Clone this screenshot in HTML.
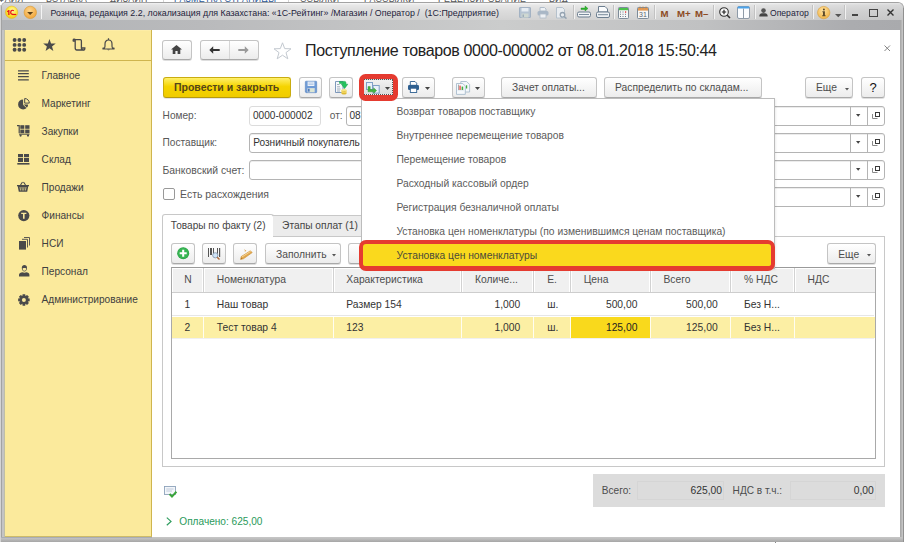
<!DOCTYPE html><html><head><meta charset="utf-8"><style>
*{margin:0;padding:0;box-sizing:border-box}
html,body{width:905px;height:543px;overflow:hidden;background:#fff}
body{position:relative;font-family:"Liberation Sans",sans-serif}
.t{position:absolute;line-height:1;white-space:nowrap}
.r{position:absolute}
.btn{position:absolute;border:1px solid #c4c4c4;border-bottom-color:#a9a9a9;border-radius:3px;background:linear-gradient(#ffffff,#ececec);box-shadow:0 1px 0 rgba(0,0,0,0.13)}
svg{position:absolute;overflow:visible}
</style></head><body>
<div class="r" style="left:0;top:0;width:905px;height:3px;overflow:hidden;background:#fff">
<div class="t" style="left:-2px;top:-4.6px;font-size:8.8px;letter-spacing:0.25px;color:#555">ФАЙЛ</div>
<div class="t" style="left:46px;top:-4.6px;font-size:8.8px;letter-spacing:0.25px;color:#555">ВСТАВКА</div>
<div class="t" style="left:110px;top:-4.6px;font-size:8.8px;letter-spacing:0.25px;color:#555">ДИЗАЙН</div>
<div class="t" style="left:174px;top:-4.6px;font-size:8.8px;letter-spacing:0.25px;color:#2b5797">РАЗМЕТКА СТРАНИЦЫ</div>
<div class="t" style="left:300px;top:-4.6px;font-size:8.8px;letter-spacing:0.25px;color:#555">ССЫЛКИ</div>
<div class="t" style="left:364px;top:-4.6px;font-size:8.8px;letter-spacing:0.25px;color:#555">РАССЫЛКИ</div>
<div class="t" style="left:438px;top:-4.6px;font-size:8.8px;letter-spacing:0.25px;color:#555">РЕЦЕНЗИРОВАНИЕ</div>
<div class="t" style="left:549px;top:-4.6px;font-size:8.8px;letter-spacing:0.25px;color:#555">ВИД</div>
<div class="r" style="left:163px;top:0;width:1px;height:3px;background:#d4d4d4"></div>
<div class="r" style="left:288px;top:0;width:1px;height:3px;background:#d4d4d4"></div>
</div>
<div class="r " style="left:0px;top:5px;width:1px;height:537px;background:#d5d5d5"></div>
<div class="r " style="left:1px;top:2px;width:903px;height:540px;background:#c6c6c6;border:1px solid #a3a3a3;border-bottom:none;border-radius:5px 6px 0 0"></div>
<div class="r " style="left:904px;top:0px;width:1px;height:543px;background:#fff"></div>
<div class="r " style="left:0px;top:542px;width:905px;height:1px;background:#fff"></div>
<div class="r " style="left:2px;top:3px;width:901px;height:17px;background:linear-gradient(#f8f8f8 0px,#e8e8e8 2px,#dcdcdc 8px,#d2d2d2 17px);border-radius:4px 5px 0 0"></div>
<div class="r " style="left:2px;top:3px;width:901px;height:17px;background:linear-gradient(90deg,rgba(150,152,156,0.28) 0px,rgba(150,152,156,0.10) 60px,rgba(255,255,255,0) 300px,rgba(255,255,255,0) 700px,rgba(140,142,146,0.18) 900px);border-radius:4px 5px 0 0"></div>
<div class="r " style="left:2px;top:20px;width:898px;height:10px;background:linear-gradient(90deg,#b1b3b6 0px,#b9babc 200px,#cbcccc 500px,#c0c1c2 700px,#abacaf 850px,#a9aaad 900px)"></div>
<div class="r " style="left:2px;top:30px;width:2px;height:507px;background:#c4c4c4"></div>
<div class="r " style="left:4px;top:30px;width:1px;height:507px;background:#c0bfa6"></div>
<div class="r " style="left:1px;top:537px;width:903px;height:5px;background:linear-gradient(#c6c6c6 0px,#bdbdbd 2px,#b4b4b4 3px,#a6a6a6 5px)"></div>
<div class="r " style="left:1px;top:537px;width:151px;height:1px;background:#a9adb5"></div>
<div class="r " style="left:775px;top:542px;width:1px;height:1px;background:#888"></div>
<div class="r " style="left:5px;top:30px;width:147px;height:507px;background:#fbea9c;border-right:1px solid #cfb54e;border-bottom:1px solid #cdbb6a"></div>
<div class="r " style="left:5px;top:30px;width:146px;height:1px;background:#fdeda6"></div>
<div class="r " style="left:5px;top:60px;width:146px;height:1px;background:#cfb54e"></div>
<div class="r " style="left:152px;top:30px;width:748px;height:507px;background:#fff"></div>
<div class="r " style="left:900px;top:20px;width:1px;height:517px;background:#aaaaaa"></div>
<div class="r " style="left:901px;top:20px;width:1px;height:517px;background:#b6b6b6"></div>
<div class="r " style="left:902px;top:20px;width:1px;height:517px;background:#c4c4c4"></div>
<div class="r " style="left:903px;top:8px;width:1px;height:534px;background:#909090"></div>
<svg style="left:5px;top:6px" width="14" height="14" viewBox="0 0 14 14"><defs><radialGradient id="g1c" cx="55%" cy="35%" r="70%"><stop offset="0" stop-color="#fffbb0"/><stop offset="0.55" stop-color="#fbe436"/><stop offset="1" stop-color="#eec112"/></radialGradient></defs><circle cx="6.6" cy="6.3" r="6.2" fill="url(#g1c)" stroke="#e0b52a" stroke-width="0.5"/><path d="M2 5.3 L3.6 4 H4.5 V8.9 H3.2 V5.7 L2.3 6.2 Z" fill="#e8121a"/><path d="M8.7 5 C8.2 3.9 5.7 3.9 5.7 6.3 C5.7 8.2 6.9 8.5 8.3 8.4" fill="none" stroke="#e8121a" stroke-width="1.2"/><path d="M7.4 8.5 H11.2" stroke="#e8121a" stroke-width="1.2"/></svg>
<svg style="left:23px;top:6px" width="14" height="14" viewBox="0 0 14 14"><defs><radialGradient id="gdd" cx="45%" cy="35%" r="65%"><stop offset="0" stop-color="#ffd68a"/><stop offset="1" stop-color="#f0a43a"/></radialGradient></defs><circle cx="7.3" cy="6.4" r="6.2" fill="url(#gdd)" stroke="#d8982e" stroke-width="0.6"/><path d="M4.1 5.9 H10.2 L7.15 9 Z" fill="#5a3f18"/></svg>
<div class="r " style="left:41px;top:5px;width:1px;height:14px;background:#b8b8b8;border-right:1px solid #f4f4f4"></div>
<div class="t " style="top:9.00px;font-size:8.85px;color:#1e1e3c;left:50.40px;">Розница, редакция 2.2, локализация для Казахстана: «1С-Рейтинг» /Магазин / Оператор /&nbsp; (1С:Предприятие)</div>
<svg style="left:519px;top:7px" width="12" height="11" viewBox="0 0 12 11"><rect x="0.5" y="0.5" width="11" height="10" rx="0.5" fill="#b5c3d2" stroke="#a3b2c3"/><rect x="2.5" y="1" width="7" height="3.5" fill="#e6ecf2"/><rect x="2.5" y="6.5" width="7" height="4" fill="#cfd8d2"/><rect x="3.5" y="7.5" width="1.5" height="2.5" fill="#9eacba"/></svg>
<svg style="left:537px;top:7px" width="12" height="11" viewBox="0 0 12 11"><path d="M3 0.5 H7.5 L9 2 V4 H3 Z" fill="#eef1f4" stroke="#b0bcc8"/><rect x="0.5" y="4" width="11" height="4.5" rx="1.5" fill="#a9b7c6"/><rect x="3" y="7" width="6" height="4" fill="#eef1f4" stroke="#b0bcc8" stroke-width="0.8"/></svg>
<svg style="left:556px;top:7px" width="12" height="12" viewBox="0 0 12 12"><path d="M0.5 0.5 H6.5 L8.5 2.5 V11 H0.5 Z" fill="#e9edf1" stroke="#b5c1cc"/><circle cx="6.5" cy="7.8" r="2.3" fill="none" stroke="#95a3b1" stroke-width="1.3"/><path d="M8.2 9.5 L10.5 11.6" stroke="#95a3b1" stroke-width="1.5"/></svg>
<div class="r" style="left:573px;top:5px;width:1px;height:14px;background:#c2c2c2;box-shadow:1px 0 0 #f2f2f2"></div>
<svg style="left:577px;top:5px" width="14" height="13" viewBox="0 0 14 13"><path d="M4 3 H8 V1 L11 3.5 L8 6 V4.5 H4 Z" fill="#2fb52f" stroke="#1c8c1c" stroke-width="0.4"/><rect x="0.5" y="7" width="13" height="5" rx="1.5" fill="#f2f4f6" stroke="#6d7f90"/><path d="M2 9.5 H12" stroke="#7b8c9c" stroke-width="1"/></svg>
<svg style="left:596px;top:6px" width="14" height="12" viewBox="0 0 14 12"><path d="M2.5 0.5 H9 L11.5 3 V6 H2.5 Z" fill="#fbfcfd" stroke="#6d7f90"/><rect x="0.5" y="6" width="13" height="5.5" rx="1.5" fill="#eef1f4" stroke="#6d7f90"/><path d="M2 8.7 H12" stroke="#7b8c9c" stroke-width="1"/></svg>
<div class="r" style="left:613px;top:5px;width:1px;height:14px;background:#c2c2c2;box-shadow:1px 0 0 #f2f2f2"></div>
<svg style="left:618px;top:7px" width="11" height="12" viewBox="0 0 11 12"><rect x="0.5" y="0.5" width="10" height="11" rx="0.8" fill="#f5f6f7" stroke="#7d8b99"/><rect x="1" y="1" width="9" height="2.2" fill="#4cc24c"/><g fill="#6f7c88"><rect x="2" y="4.5" width="1" height="1"/><rect x="4.5" y="4.5" width="1" height="1"/><rect x="2" y="6.8" width="1" height="1"/><rect x="4.5" y="6.8" width="1" height="1"/><rect x="7" y="6.8" width="1" height="1"/><rect x="2" y="9" width="1" height="1"/><rect x="4.5" y="9" width="1" height="1"/><rect x="7" y="9" width="1" height="1"/></g><rect x="7" y="4.3" width="1.2" height="1.5" fill="#e63a3a"/></svg>
<svg style="left:637px;top:6px" width="12" height="13" viewBox="0 0 12 13"><rect x="0.5" y="1.5" width="11" height="11" rx="0.8" fill="#f7f7f7" stroke="#7d8b99"/><rect x="1" y="2" width="10" height="2.6" fill="#e39a55"/><path d="M3 0.5 V2.5 M6 0.5 V2.5 M9 0.5 V2.5" stroke="#c9843f" stroke-width="0.8"/><text x="2" y="11" font-family="Liberation Sans" font-size="7" fill="#5b6670">31</text></svg>
<div class="r" style="left:654px;top:5px;width:1px;height:14px;background:#c2c2c2;box-shadow:1px 0 0 #f2f2f2"></div>
<div class="t " style="top:9.00px;font-size:9.6px;color:#8c4a22;left:660.60px;font-weight:bold;">M</div>
<div class="t " style="top:9.00px;font-size:9.6px;color:#8c4a22;left:677.00px;font-weight:bold;">M+</div>
<div class="t " style="top:9.00px;font-size:9.6px;color:#8c4a22;left:695.00px;font-weight:bold;">M&#8211;</div>
<div class="r" style="left:713px;top:5px;width:1px;height:14px;background:#c2c2c2;box-shadow:1px 0 0 #f2f2f2"></div>
<svg style="left:719px;top:7px" width="12" height="12" viewBox="0 0 12 12"><circle cx="5" cy="5" r="4.3" fill="#fafafa" stroke="#333" stroke-width="1.1"/><path d="M2.8 5 H7.2 M5 2.8 V7.2" stroke="#222" stroke-width="1.2"/><path d="M8 8 L11 11" stroke="#333" stroke-width="1.6"/></svg>
<svg style="left:737px;top:6px" width="13" height="13" viewBox="0 0 13 13"><rect x="0.5" y="0.5" width="12" height="12" rx="1.5" fill="#fafcff" stroke="#8d9aa8"/><rect x="0.5" y="0.5" width="12" height="2" rx="1" fill="#4aa3ec"/><path d="M6.5 2.5 V12.5" stroke="#8d9aa8" stroke-width="1"/></svg>
<div class="r" style="left:754px;top:5px;width:1px;height:14px;background:#c2c2c2;box-shadow:1px 0 0 #f2f2f2"></div>
<svg style="left:759px;top:8px" width="9" height="9" viewBox="0 0 9 9"><circle cx="4.5" cy="2.6" r="2.3" fill="#555"/><path d="M0.3 8.6 C0.3 5.8 2 5.3 4.5 5.3 C7 5.3 8.7 5.8 8.7 8.6 Z" fill="#444"/></svg>
<div class="t " style="top:9.00px;font-size:8.6px;color:#1e1e3c;left:770.00px;">Оператор</div>
<div class="r" style="left:812px;top:5px;width:1px;height:14px;background:#c2c2c2;box-shadow:1px 0 0 #f2f2f2"></div>
<svg style="left:817px;top:6px" width="14" height="14" viewBox="0 0 14 14"><defs><radialGradient id="ginf" cx="45%" cy="35%" r="65%"><stop offset="0" stop-color="#ffe3a3"/><stop offset="1" stop-color="#f1b447"/></radialGradient></defs><circle cx="6.7" cy="6.6" r="6.2" fill="url(#ginf)" stroke="#d9a03d" stroke-width="0.6"/><circle cx="6.9" cy="3.4" r="1" fill="#5c4a2a"/><path d="M5.4 5.3 H7.9 V9.3 H8.6 V10.3 H5.2 V9.3 H6 V6.3 H5.4 Z" fill="#5c4a2a"/></svg>
<svg style="left:835px;top:14px" width="7" height="4" viewBox="0 0 7 4"><path d="M0 0 H6.5 L3.25 3.3 Z" fill="#555"/></svg>
<div class="r" style="left:844px;top:5px;width:1px;height:14px;background:#c2c2c2;box-shadow:1px 0 0 #f2f2f2"></div>
<div class="r" style="left:852px;top:14px;width:6px;height:2px;background:#444"></div>
<div class="r" style="left:869px;top:9px;width:9px;height:8px;border:1px solid #444;border-top-width:1px"></div>
<svg style="left:887px;top:9px" width="7" height="7" viewBox="0 0 7 7"><path d="M0.5 0.5 L6.5 6.5 M6.5 0.5 L0.5 6.5" stroke="#333" stroke-width="1.4"/></svg>
<svg style="left:12px;top:38px" width="15" height="14" viewBox="0 0 15 14"><circle cx="2.60" cy="2.00" r="1.95" fill="#4a4a4a"/><circle cx="2.60" cy="6.90" r="1.95" fill="#4a4a4a"/><circle cx="2.60" cy="11.80" r="1.95" fill="#4a4a4a"/><circle cx="7.40" cy="2.00" r="1.95" fill="#4a4a4a"/><circle cx="7.40" cy="6.90" r="1.95" fill="#4a4a4a"/><circle cx="7.40" cy="11.80" r="1.95" fill="#4a4a4a"/><circle cx="12.20" cy="2.00" r="1.95" fill="#4a4a4a"/><circle cx="12.20" cy="6.90" r="1.95" fill="#4a4a4a"/><circle cx="12.20" cy="11.80" r="1.95" fill="#4a4a4a"/></svg>
<svg style="left:42.5px;top:39.4px" width="13" height="13" viewBox="0 0 13 13"><path d="M6.45 0.00 L8.04 4.42 L12.73 4.56 L9.02 7.43 L10.33 11.94 L6.45 9.30 L2.57 11.94 L3.88 7.43 L0.17 4.56 L4.86 4.42 Z" fill="#4a4a4a"/></svg>
<svg style="left:72.3px;top:39.2px" width="14" height="12" viewBox="0 0 14 12"><path d="M1.2 1 C1.2 0 3 0 3.2 1 L3.2 2 L1.2 2 Z M2.2 0.6 H8.2 C9.6 0.6 9.4 2.2 9.4 3 V9 C9.4 10 10.4 11 11.6 11 H4.8 C3.6 11 3.2 10 3.2 9 V1.8" fill="none" stroke="#4a4a4a" stroke-width="1.3" stroke-linejoin="round"/><path d="M9.4 9 H12.8 V10 C12.8 11 11.6 11 11.6 11" fill="none" stroke="#4a4a4a" stroke-width="1.3"/></svg>
<svg style="left:101.8px;top:38.3px" width="13" height="13" viewBox="0 0 13 13"><path d="M6.5 0.3 V1.5 M2.5 10 C3.2 9 3 7.8 3 6 C3 3.6 4.5 2 6.5 2 C8.5 2 10 3.6 10 6 C10 7.8 9.8 9 10.5 10 H12 V11 H1 V10 Z" fill="none" stroke="#4a4a4a" stroke-width="1.2" stroke-linejoin="round"/><path d="M5.2 11.5 C5.4 12.6 7.6 12.6 7.8 11.5 Z" fill="#4a4a4a"/></svg>
<div class="t " style="top:71.00px;font-size:10.1px;color:#404040;left:41.60px;">Главное</div>
<div class="t " style="top:99.00px;font-size:10.1px;color:#404040;left:41.60px;">Маркетинг</div>
<div class="t " style="top:127.00px;font-size:10.1px;color:#404040;left:41.60px;">Закупки</div>
<div class="t " style="top:155.00px;font-size:10.1px;color:#404040;left:41.60px;">Склад</div>
<div class="t " style="top:183.00px;font-size:10.1px;color:#404040;left:41.60px;">Продажи</div>
<div class="t " style="top:211.00px;font-size:10.1px;color:#404040;left:41.60px;">Финансы</div>
<div class="t " style="top:239.00px;font-size:10.1px;color:#404040;left:41.60px;">НСИ</div>
<div class="t " style="top:267.00px;font-size:10.1px;color:#404040;left:41.60px;">Персонал</div>
<div class="t " style="top:295.00px;font-size:10.1px;color:#404040;left:41.60px;">Администрирование</div>
<svg style="left:18.3px;top:69.6px" width="11" height="11" viewBox="0 0 11 11"><path d="M0 0.8 H10.8 M0 3.7 H10.8 M0 6.6 H10.8 M0 9.9 H10.8" stroke="#4a4a4a" stroke-width="1.3"/></svg>
<svg style="left:18px;top:97.6px" width="12" height="12" viewBox="0 0 12 12"><path d="M5.1 1.4 A5 5 0 1 0 10.1 6.4 H5.1 Z" fill="#4a4a4a"/><path d="M6.7 0.5 A4.6 4.6 0 0 1 11.3 5.1 H6.7 Z" fill="#fbea9c" stroke="#4a4a4a" stroke-width="1"/><path d="M5.1 6.4 L8.8 9.9" stroke="#fbea9c" stroke-width="0.9"/></svg>
<svg style="left:17.2px;top:125px" width="13" height="12" viewBox="0 0 13 12"><path d="M0 0.7 H2.2 V8.3" stroke="#4a4a4a" stroke-width="1.2" fill="none"/><g fill="#4a4a4a"><rect x="3.3" y="0.2" width="4" height="3.6"/><rect x="8.2" y="0.2" width="4.3" height="3.6"/><rect x="3.3" y="4.6" width="4" height="3.6"/><rect x="8.2" y="4.6" width="4.3" height="3.6"/><rect x="2" y="8.7" width="10.5" height="1"/><circle cx="3.6" cy="10.6" r="1.1"/><circle cx="11" cy="10.6" r="1.1"/></g></svg>
<svg style="left:17px;top:153px" width="13" height="12" viewBox="0 0 13 12"><g fill="#4a4a4a"><rect x="1" y="1" width="5" height="3.2"/><rect x="7" y="1" width="5" height="3.2"/><rect x="1" y="5" width="5" height="4"/><rect x="7" y="5" width="5" height="4"/><rect x="0.3" y="10" width="12.2" height="1.6"/></g></svg>
<svg style="left:17.3px;top:180.8px" width="12" height="11" viewBox="0 0 12 11"><path d="M3.5 4 L5.5 1 M8.5 4 L6.5 1" stroke="#4a4a4a" stroke-width="1.1" fill="none"/><path d="M0 4 H12 V5.3 H11.3 L10.2 10.8 H1.8 L0.7 5.3 H0 Z" fill="#4a4a4a"/><path d="M3 6 L3.6 9.5 M5 6 L5.3 9.5 M7 6 L6.7 9.5 M9 6 L8.4 9.5" stroke="#fae99c" stroke-width="0.7"/></svg>
<svg style="left:18px;top:209.6px" width="12" height="12" viewBox="0 0 12 12"><circle cx="5.8" cy="5.6" r="5.6" fill="#4a4a4a"/><path d="M3.2 2.8 H8.4 V4 H6.6 V8.8 H5 V4 H3.2 Z" fill="#fae99c"/></svg>
<svg style="left:18.8px;top:236.6px" width="11" height="13" viewBox="0 0 11 13"><path d="M5 0.5 H10.5 V8.5" stroke="#4a4a4a" stroke-width="0.9" fill="none"/><path d="M3 2.3 H8.5 V10.5" stroke="#4a4a4a" stroke-width="0.9" fill="none"/><rect x="0" y="4" width="7" height="8.6" fill="#4a4a4a"/></svg>
<svg style="left:18.9px;top:265.3px" width="11" height="12" viewBox="0 0 11 12"><path d="M2.8 2.8 C2.8 0.8 4 0 5.4 0 C6.9 0 8 0.8 8 2.8 C8 5.2 6.8 6.5 5.4 6.5 C4 6.5 2.8 5.2 2.8 2.8 Z" fill="#4a4a4a"/><path d="M0 11.6 V9.8 C0 8 1.8 7.2 3.5 7.2 C4.4 7.8 6.4 7.8 7.3 7.2 C9 7.2 10.4 8 10.4 9.8 V11.6 Z" fill="#4a4a4a"/><path d="M3.6 3.4 C4.4 2.8 6.4 2.8 7.2 3.4 C7.2 5 6.4 5.8 5.4 5.8 C4.4 5.8 3.6 5 3.6 3.4 Z" fill="#fae99c"/></svg>
<svg style="left:17.9px;top:293.5px" width="12" height="12" viewBox="0 0 12 12"><path d="M11.66 4.61 L11.66 7.19 L9.80 7.46 L9.76 7.56 L10.88 9.06 L9.06 10.88 L7.56 9.76 L7.46 9.80 L7.19 11.66 L4.61 11.66 L4.34 9.80 L4.24 9.76 L2.74 10.88 L0.92 9.06 L2.04 7.56 L2.00 7.46 L0.14 7.19 L0.14 4.61 L2.00 4.34 L2.04 4.24 L0.92 2.74 L2.74 0.92 L4.24 2.04 L4.34 2.00 L4.61 0.14 L7.19 0.14 L7.46 2.00 L7.56 2.04 L9.06 0.92 L10.88 2.74 L9.76 4.24 L9.80 4.34 Z" fill="#4a4a4a"/><circle cx="5.9" cy="5.9" r="2" fill="#fae99c"/></svg>
<div class="btn" style="left:162px;top:40px;width:29.6px;height:20px"></div>
<svg style="left:171px;top:45px" width="11" height="9" viewBox="0 0 11 9"><path d="M5.5 0 L11 4.6 H9.3 V9 H6.6 V6 H4.4 V9 H1.7 V4.6 H0 Z" fill="#444"/></svg>
<div class="btn" style="left:200.3px;top:40px;width:58.7px;height:20px"></div>
<div class="r" style="left:229px;top:41px;width:1px;height:18px;background:#d6d6d6"></div>
<svg style="left:209px;top:46px" width="11" height="8" viewBox="0 0 11 8"><path d="M0.3 4 L4.2 0.2 V2.9 H10.7 V5.1 H4.2 V7.8 Z" fill="#333"/></svg>
<svg style="left:238px;top:46px" width="11" height="8" viewBox="0 0 11 8"><path d="M10.7 4 L6.8 0.2 V2.9 H0.3 V5.1 H6.8 V7.8 Z" fill="#9a9a9a"/></svg>
<svg style="left:273px;top:41.5px" width="19" height="18" viewBox="0 0 19 18"><path d="M9.5 0.8 L11.7 6.6 L18 6.8 L13 10.6 L14.8 16.8 L9.5 13.2 L4.2 16.8 L6 10.6 L1 6.8 L7.3 6.6 Z" fill="none" stroke="#c3c9d0" stroke-width="1"/></svg>
<div class="t " style="top:43.00px;font-size:16px;color:#222;left:305.00px;letter-spacing:-0.375px;">Поступление товаров 0000-000002 от 08.01.2018 15:50:44</div>
<svg style="left:883.5px;top:44.5px" width="7" height="7" viewBox="0 0 7 7"><path d="M0.5 0.5 L6 6 M6 0.5 L0.5 6" stroke="#777" stroke-width="0.9"/></svg>
<div class="r" style="left:162.5px;top:77px;width:128.5px;height:20.5px;border:1px solid #c9ac10;border-bottom-color:#b59a10;border-radius:3px;background:linear-gradient(#fff06a,#f5d400 45%,#f0cc00);box-shadow:0 1px 0 rgba(0,0,0,0.1)"></div>
<div class="t " style="top:82.00px;font-size:10.5px;color:#54461a;left:174.00px;font-weight:bold;">Провести и закрыть</div>
<div class="btn" style="left:298.5px;top:77px;width:23.5px;height:20.5px"></div>
<svg style="left:304.5px;top:81.2px" width="12" height="12" viewBox="0 0 12 12"><path d="M0.3 0.8 C0.3 0.4 0.6 0.2 1 0.2 H11 C11.4 0.2 11.7 0.4 11.7 0.8 V11 C11.7 11.4 11.4 11.7 11 11.7 H1 L0.3 11 Z" fill="#6f9bd6" stroke="#4d7ab8" stroke-width="0.5"/><rect x="2.6" y="0.6" width="6.8" height="4.4" fill="#eef3fa"/><path d="M3.4 2 H8.6 M3.4 3.4 H8.6" stroke="#9bb7de" stroke-width="0.7"/><rect x="2.4" y="7" width="7.4" height="4.4" fill="#c9d3dc"/><rect x="3" y="7.8" width="1.6" height="2.8" fill="#4d7ab8"/><rect x="5.2" y="7.6" width="4" height="3.4" fill="#dce6d2"/></svg>
<div class="btn" style="left:329px;top:77px;width:24px;height:20.5px"></div>
<svg style="left:334.5px;top:80.5px" width="14" height="14" viewBox="0 0 14 14"><path d="M0.5 0.5 H8 V11.5 H0.5 Z" fill="#f6f8fb" stroke="#6f8db3" stroke-width="0.9"/><path d="M2 3.5 H4.5 M2 5.8 H5 M2 8 H5.5 M2 10 H5" stroke="#8b9aab" stroke-width="0.8"/><ellipse cx="9" cy="12.2" rx="2.6" ry="1.3" fill="#d9b52c"/><rect x="6.4" y="9" width="5.2" height="3.2" fill="#efd25a"/><ellipse cx="9" cy="9" rx="2.6" ry="1.1" fill="#f8e68a"/><path d="M9.2 11 L9.2 10.4" stroke="#c9a21e" stroke-width="0.5"/><path d="M4.5 0.4 H9.8 C10.6 0.4 10.9 1 10.9 1.8 V3.2 H12.8 L9.6 7.6 L6.4 3.2 H8.2 V2.4 H4.5 Z" fill="#22c55e" stroke="#169a45" stroke-width="0.5"/></svg>
<div class="btn" style="left:401.5px;top:77px;width:33px;height:20.5px"></div>
<svg style="left:408px;top:81.3px" width="11" height="12" viewBox="0 0 11 12"><path d="M2.3 0.5 H7 L8.7 2.2 V4.3 H2.3 Z" fill="#fff" stroke="#2e5f90" stroke-width="0.9"/><rect x="0" y="4" width="11" height="5" rx="1.3" fill="#2e5f90"/><rect x="2.3" y="7.2" width="6.4" height="4.3" fill="#fff" stroke="#2e5f90" stroke-width="0.9"/></svg>
<svg style="left:425.3px;top:87.1px" width="5" height="3" viewBox="0 0 5 3"><path d="M0 0 H5 L2.5 3 Z" fill="#444"/></svg>
<div class="btn" style="left:451.5px;top:77px;width:33px;height:20.5px"></div>
<svg style="left:456px;top:80.5px" width="15" height="14" viewBox="0 0 15 14"><path d="M4.8 0.5 H10.6 L13.6 3.5 V11 H4.8 Z" fill="#f4f7fa" stroke="#a9bccd" stroke-width="0.9"/><rect x="10" y="4.3" width="1.2" height="3.2" fill="#3fae3f"/><path d="M0.5 2.5 H6.8 L9.3 5 V13.4 H0.5 Z" fill="#f6f9fc" stroke="#a9bccd" stroke-width="0.9"/><rect x="2" y="3.6" width="0.7" height="5.4" fill="#8a8a8a"/><rect x="3.4" y="4.6" width="1.3" height="4.4" fill="#e8463c"/><rect x="5.6" y="5.6" width="1.6" height="3.4" fill="#43ad43"/><path d="M1.5 9.6 H8" stroke="#d9e2ea" stroke-width="0.6"/></svg>
<svg style="left:474.8px;top:87.1px" width="5" height="3" viewBox="0 0 5 3"><path d="M0 0 H5 L2.5 3 Z" fill="#444"/></svg>
<div class="btn" style="left:500.5px;top:77px;width:96px;height:20.5px"></div>
<div class="t " style="top:83.00px;font-size:10.2px;color:#4d4d4d;left:512.00px;">Зачет оплаты...</div>
<div class="btn" style="left:604px;top:77px;width:158px;height:20.5px"></div>
<div class="t " style="top:83.00px;font-size:10.3px;color:#4d4d4d;left:615.00px;">Распределить по складам...</div>
<div class="btn" style="left:805px;top:77px;width:48px;height:20.5px"></div>
<div class="t " style="top:83.00px;font-size:10.3px;color:#4d4d4d;left:816.00px;">Еще</div>
<svg style="left:844.5px;top:87.5px" width="4" height="2.5" viewBox="0 0 4 2.5"><path d="M0 0 H4 L2 2.5 Z" fill="#555"/></svg>
<div class="btn" style="left:861px;top:77px;width:23.5px;height:20.5px"></div>
<div class="t " style="top:81.00px;font-size:13px;color:#111;left:869.50px;">?</div>
<div class="t " style="top:111.00px;font-size:10.1px;color:#585858;left:162.60px;">Номер:</div>
<div class="r" style="left:249px;top:106px;width:72px;height:20px;border:1px solid #dcdcdc;border-radius:3px;background:#fff"></div>
<div class="t " style="top:111.00px;font-size:10.1px;color:#333;left:253.00px;">0000-000002</div>
<div class="t " style="top:111.00px;font-size:10.1px;color:#585858;left:329.80px;">от:</div>
<div class="r" style="left:346px;top:106px;width:538.8px;height:20px;border:1px solid #b4b4b4;border-radius:3px;background:#fff;box-shadow:inset 0 1px 0 #ececec"></div>
<div class="r" style="left:850px;top:106px;width:1px;height:20px;background:#b4b4b4"></div>
<div class="r" style="left:867px;top:106px;width:1px;height:20px;background:#b4b4b4"></div>
<svg style="left:856.3px;top:114.1px" width="4.4" height="2.8" viewBox="0 0 4.4 2.8"><path d="M0 0 H4.4 L2.2 2.8 Z" fill="#444"/></svg>
<svg style="left:872px;top:112px" width="9" height="8" viewBox="0 0 9 8"><path d="M0.5 2 V6.5 H5.5" fill="none" stroke="#8a8a8a" stroke-width="1"/><rect x="3.5" y="0.5" width="4" height="4" fill="#fff" stroke="#3a3a3a" stroke-width="1"/></svg>
<div class="t " style="top:111.00px;font-size:10.1px;color:#333;left:349.50px;">08.01.2018 15:50:44</div>
<div class="t " style="top:138.00px;font-size:10.1px;color:#585858;left:162.60px;">Поставщик:</div>
<div class="r" style="left:249.2px;top:133px;width:635.6px;height:20px;border:1px solid #b4b4b4;border-radius:3px;background:#fff;box-shadow:inset 0 1px 0 #ececec"></div>
<div class="r" style="left:850px;top:133px;width:1px;height:20px;background:#b4b4b4"></div>
<div class="r" style="left:867px;top:133px;width:1px;height:20px;background:#b4b4b4"></div>
<svg style="left:856.3px;top:141.1px" width="4.4" height="2.8" viewBox="0 0 4.4 2.8"><path d="M0 0 H4.4 L2.2 2.8 Z" fill="#444"/></svg>
<svg style="left:872px;top:139px" width="9" height="8" viewBox="0 0 9 8"><path d="M0.5 2 V6.5 H5.5" fill="none" stroke="#8a8a8a" stroke-width="1"/><rect x="3.5" y="0.5" width="4" height="4" fill="#fff" stroke="#3a3a3a" stroke-width="1"/></svg>
<div class="t " style="top:138.00px;font-size:10.1px;color:#333;left:253.20px;">Розничный покупатель</div>
<div class="t " style="top:166.00px;font-size:10.4px;color:#585858;left:162.50px;">Банковский счет:</div>
<div class="r" style="left:249.1px;top:160px;width:635.7px;height:20px;border:1px solid #b4b4b4;border-radius:3px;background:#fff;box-shadow:inset 0 1px 0 #ececec"></div>
<div class="r" style="left:850px;top:160px;width:1px;height:20px;background:#b4b4b4"></div>
<div class="r" style="left:867px;top:160px;width:1px;height:20px;background:#b4b4b4"></div>
<svg style="left:856.3px;top:168.1px" width="4.4" height="2.8" viewBox="0 0 4.4 2.8"><path d="M0 0 H4.4 L2.2 2.8 Z" fill="#444"/></svg>
<svg style="left:872px;top:166px" width="9" height="8" viewBox="0 0 9 8"><path d="M0.5 2 V6.5 H5.5" fill="none" stroke="#8a8a8a" stroke-width="1"/><rect x="3.5" y="0.5" width="4" height="4" fill="#fff" stroke="#3a3a3a" stroke-width="1"/></svg>
<div class="r" style="left:163px;top:188.2px;width:11.6px;height:11.4px;border:1px solid #999;border-radius:2px;background:#fff"></div>
<div class="t " style="top:190.00px;font-size:10.45px;color:#585858;left:180.10px;">Есть расхождения</div>
<div class="r" style="left:500px;top:187px;width:384.8px;height:20px;border:1px solid #b4b4b4;border-radius:3px;background:#fff;box-shadow:inset 0 1px 0 #ececec"></div>
<div class="r" style="left:850px;top:187px;width:1px;height:20px;background:#b4b4b4"></div>
<div class="r" style="left:867px;top:187px;width:1px;height:20px;background:#b4b4b4"></div>
<svg style="left:856.3px;top:195.1px" width="4.4" height="2.8" viewBox="0 0 4.4 2.8"><path d="M0 0 H4.4 L2.2 2.8 Z" fill="#444"/></svg>
<svg style="left:872px;top:193px" width="9" height="8" viewBox="0 0 9 8"><path d="M0.5 2 V6.5 H5.5" fill="none" stroke="#8a8a8a" stroke-width="1"/><rect x="3.5" y="0.5" width="4" height="4" fill="#fff" stroke="#3a3a3a" stroke-width="1"/></svg>
<div class="r" style="left:162px;top:236px;width:722.8px;height:231px;border:1px solid #c8c8c8;background:#fff"></div>
<div class="r" style="left:162px;top:214px;width:111.5px;height:23px;border:1px solid #c8c8c8;border-bottom:none;border-radius:3px 3px 0 0;background:#fff"></div>
<div class="r" style="left:273.3px;top:215px;width:110px;height:21.5px;border:1px solid #c8c8c8;border-left:none;border-radius:0 3px 0 0;background:#ececec"></div>
<div class="t " style="top:221.00px;font-size:10.1px;color:#444;left:170.80px;">Товары по факту (2)</div>
<div class="t " style="top:221.00px;font-size:10.2px;color:#444;left:282.10px;">Этапы оплат (1)</div>
<div class="btn" style="left:171px;top:243.2px;width:23.8px;height:20.6px"></div>
<svg style="left:177px;top:247.4px" width="12.4" height="12.4" viewBox="0 0 12 12"><circle cx="6" cy="6" r="5.8" fill="#2ea34a"/><circle cx="6" cy="6" r="5.2" fill="#37b552"/><path d="M6 2.6 V9.4 M2.6 6 H9.4" stroke="#fff" stroke-width="2"/></svg>
<div class="btn" style="left:202.3px;top:243.2px;width:23.3px;height:20.6px"></div>
<svg style="left:208px;top:248.2px" width="13" height="12" viewBox="0 0 13 12"><g fill="#555"><rect x="0" y="0" width="1" height="9"/><rect x="2" y="0" width="2" height="7"/><rect x="5" y="0" width="1" height="6"/><rect x="9" y="0" width="1" height="9"/><rect x="11" y="0" width="1.2" height="9"/></g><circle cx="7.3" cy="7.3" r="2.6" fill="#cfe4f7" stroke="#8a9bb0" stroke-width="0.9"/><path d="M9.2 9.2 L11.5 11.6" stroke="#b06a3a" stroke-width="1.4"/></svg>
<div class="btn" style="left:233.4px;top:243.2px;width:23.4px;height:20.6px"></div>
<svg style="left:239.5px;top:248.5px" width="13" height="11" viewBox="0 0 13 11"><path d="M0.6 10.4 L1.2 7.6 L10.4 1.8 L12.2 3.6 L3.4 9.8 Z" fill="#e2a84e" stroke="#c98b2e" stroke-width="0.6"/><path d="M1.8 8 L10.6 2.4" stroke="#f6d9a0" stroke-width="0.9"/><path d="M4.6 0.6 L5.8 1.8 L5 2.6" fill="#e2a84e" stroke="#c98b2e" stroke-width="0.5"/><path d="M0.6 10.4 L1.6 8.6 L2.4 9.6 Z" fill="#a8701e"/></svg>
<div class="btn" style="left:265px;top:243.2px;width:75.6px;height:20.6px"></div>
<div class="t " style="top:250.00px;font-size:10.3px;color:#4d4d4d;left:276.00px;">Заполнить</div>
<svg style="left:331.5px;top:253.8px" width="4" height="2.5" viewBox="0 0 4 2.5"><path d="M0 0 H4 L2 2.5 Z" fill="#555"/></svg>
<div class="btn" style="left:348.3px;top:243.2px;width:40px;height:20.6px"></div>
<div class="btn" style="left:827.4px;top:243px;width:48.3px;height:20.8px"></div>
<div class="t " style="top:250.00px;font-size:10.3px;color:#4d4d4d;left:838.20px;">Еще</div>
<svg style="left:867px;top:254px" width="4" height="2.5" viewBox="0 0 4 2.5"><path d="M0 0 H4 L2 2.5 Z" fill="#555"/></svg>
<div class="r" style="left:171.3px;top:267.3px;width:704.7px;height:191.5px;border:1px solid #a9a9a9;border-top-color:#9a9a9a;background:#fff"></div>
<div class="r" style="left:172px;top:268px;width:703px;height:24px;background:#f0f0f0;box-shadow:inset 1px 1px 0 #fff"></div>
<div class="r" style="left:172px;top:292px;width:703px;height:1px;background:#cdcdcd"></div>
<div class="r" style="left:202px;top:268px;width:3px;height:24px;background:linear-gradient(90deg,#fff 0,#fff 1px,#d2d2d2 1px,#d2d2d2 2px,#fff 2px)"></div>
<div class="r" style="left:332px;top:268px;width:3px;height:24px;background:linear-gradient(90deg,#fff 0,#fff 1px,#d2d2d2 1px,#d2d2d2 2px,#fff 2px)"></div>
<div class="r" style="left:460px;top:268px;width:3px;height:24px;background:linear-gradient(90deg,#fff 0,#fff 1px,#d2d2d2 1px,#d2d2d2 2px,#fff 2px)"></div>
<div class="r" style="left:532px;top:268px;width:3px;height:24px;background:linear-gradient(90deg,#fff 0,#fff 1px,#d2d2d2 1px,#d2d2d2 2px,#fff 2px)"></div>
<div class="r" style="left:569px;top:268px;width:3px;height:24px;background:linear-gradient(90deg,#fff 0,#fff 1px,#d2d2d2 1px,#d2d2d2 2px,#fff 2px)"></div>
<div class="r" style="left:649px;top:268px;width:3px;height:24px;background:linear-gradient(90deg,#fff 0,#fff 1px,#d2d2d2 1px,#d2d2d2 2px,#fff 2px)"></div>
<div class="r" style="left:729px;top:268px;width:3px;height:24px;background:linear-gradient(90deg,#fff 0,#fff 1px,#d2d2d2 1px,#d2d2d2 2px,#fff 2px)"></div>
<div class="r" style="left:793px;top:268px;width:3px;height:24px;background:linear-gradient(90deg,#fff 0,#fff 1px,#d2d2d2 1px,#d2d2d2 2px,#fff 2px)"></div>
<div class="t " style="top:275.00px;font-size:10.3px;color:#4d4d4d;left:184.30px;">N</div>
<div class="t " style="top:275.00px;font-size:10.3px;color:#4d4d4d;left:216.80px;">Номенклатура</div>
<div class="t " style="top:275.00px;font-size:10.3px;color:#4d4d4d;left:346.30px;">Характеристика</div>
<div class="t " style="top:275.00px;font-size:10.3px;color:#4d4d4d;left:475.00px;">Количе...</div>
<div class="t " style="top:275.00px;font-size:10.3px;color:#4d4d4d;left:547.20px;">Е.</div>
<div class="t " style="top:275.00px;font-size:10.3px;color:#4d4d4d;left:583.70px;">Цена</div>
<div class="t " style="top:275.00px;font-size:10.3px;color:#4d4d4d;left:663.40px;">Всего</div>
<div class="t " style="top:275.00px;font-size:10.3px;color:#4d4d4d;left:744.00px;">% НДС</div>
<div class="t " style="top:275.00px;font-size:10.3px;color:#4d4d4d;left:807.50px;">НДС</div>
<div class="r" style="left:172.3px;top:315.3px;width:702px;height:1px;background:#e6e6e6"></div>
<div class="r" style="left:172px;top:317px;width:703px;height:21px;background:#fcefa4"></div>
<div class="r" style="left:571px;top:317px;width:79px;height:21px;background:#f9d91c"></div>
<div class="r" style="left:203px;top:317px;width:1px;height:21px;background:#fffdf0"></div>
<div class="r" style="left:333px;top:317px;width:1px;height:21px;background:#fffdf0"></div>
<div class="r" style="left:461px;top:317px;width:1px;height:21px;background:#fffdf0"></div>
<div class="r" style="left:533px;top:317px;width:1px;height:21px;background:#fffdf0"></div>
<div class="r" style="left:570px;top:317px;width:1px;height:21px;background:#fffdf0"></div>
<div class="r" style="left:650px;top:317px;width:1px;height:21px;background:#fffdf0"></div>
<div class="r" style="left:730px;top:317px;width:1px;height:21px;background:#fffdf0"></div>
<div class="r" style="left:794px;top:317px;width:1px;height:21px;background:#fffdf0"></div>
<div class="r" style="left:172.3px;top:337.8px;width:702px;height:1px;background:#f0f0f0"></div>
<div class="t " style="top:300.00px;font-size:10.3px;color:#333;left:184.50px;">1</div>
<div class="t " style="top:300.00px;font-size:10.3px;color:#333;left:216.80px;">Наш товар</div>
<div class="t " style="top:300.00px;font-size:10.3px;color:#333;left:346.30px;">Размер 154</div>
<div class="t " style="top:300.00px;font-size:10.3px;color:#333;right:384.70px;">1,000</div>
<div class="t " style="top:300.00px;font-size:10.3px;color:#333;left:547.20px;">ш.</div>
<div class="t " style="top:300.00px;font-size:10.3px;color:#333;right:267.60px;">500,00</div>
<div class="t " style="top:300.00px;font-size:10.3px;color:#333;right:187.40px;">500,00</div>
<div class="t " style="top:300.00px;font-size:10.3px;color:#333;left:744.00px;">Без Н...</div>
<div class="t " style="top:323.00px;font-size:10.3px;color:#333;left:184.50px;">2</div>
<div class="t " style="top:323.00px;font-size:10.3px;color:#333;left:216.80px;">Тест товар 4</div>
<div class="t " style="top:323.00px;font-size:10.3px;color:#333;left:346.30px;">123</div>
<div class="t " style="top:323.00px;font-size:10.3px;color:#333;right:384.70px;">1,000</div>
<div class="t " style="top:323.00px;font-size:10.3px;color:#333;left:547.20px;">ш.</div>
<div class="t " style="top:323.00px;font-size:10.3px;color:#222;right:267.60px;">125,00</div>
<div class="t " style="top:323.00px;font-size:10.3px;color:#333;right:187.40px;">125,00</div>
<div class="t " style="top:323.00px;font-size:10.3px;color:#333;left:744.00px;">Без Н...</div>
<svg style="left:163.8px;top:485.8px" width="13" height="12" viewBox="0 0 13 12"><rect x="0.5" y="0.5" width="11" height="8" fill="#f3f6fa" stroke="#8ea3bb" stroke-width="0.9"/><path d="M2.3 3 H9.5 M2.3 5 H8" stroke="#b3c2d3" stroke-width="0.8"/><path d="M5.6 8 L8 10.6 L12.4 5.8" fill="none" stroke="#3aa53a" stroke-width="2"/></svg>
<svg style="left:166.4px;top:516.8px" width="6" height="9" viewBox="0 0 6 9"><path d="M0.8 0.6 L5 4.4 L0.8 8.2" fill="none" stroke="#2f9d5f" stroke-width="1.2"/></svg>
<div class="t " style="top:517.00px;font-size:10.1px;color:#2a9a5b;left:179.30px;">Оплачено: 625,00</div>
<div class="r" style="left:593.3px;top:474px;width:291.5px;height:33px;background:#dcdcdc"></div>
<div class="r" style="left:636.6px;top:481px;width:87.2px;height:19.4px;border:1px solid #d5d5d5;background:#dcdcdc"></div>
<div class="r" style="left:789.6px;top:481px;width:86px;height:19.4px;border:1px solid #d5d5d5;background:#dcdcdc"></div>
<div class="t " style="top:486.00px;font-size:10.1px;color:#4d4d4d;left:601.80px;">Всего:</div>
<div class="t " style="top:486.00px;font-size:10.3px;color:#333;right:183.00px;">625,00</div>
<div class="t " style="top:486.00px;font-size:10.1px;color:#4d4d4d;left:732.60px;">НДС в т.ч.:</div>
<div class="t " style="top:486.00px;font-size:10.3px;color:#333;right:31.20px;">0,00</div>
<div class="r" style="left:360.8px;top:98px;width:414px;height:171px;border:1px solid #bcbcbc;background:#fff;box-shadow:1px 1px 2px rgba(0,0,0,0.08)"></div>
<div class="t " style="top:107.00px;font-size:10.3px;color:#5c5c5c;left:396.40px;">Возврат товаров поставщику</div>
<div class="t " style="top:131.00px;font-size:10.3px;color:#5c5c5c;left:396.40px;">Внутреннее перемещение товаров</div>
<div class="t " style="top:155.00px;font-size:10.3px;color:#5c5c5c;left:396.40px;">Перемещение товаров</div>
<div class="t " style="top:179.00px;font-size:10.3px;color:#5c5c5c;left:396.40px;">Расходный кассовый ордер</div>
<div class="t " style="top:203.00px;font-size:10.3px;color:#5c5c5c;left:396.40px;">Регистрация безналичной оплаты</div>
<div class="t " style="top:227.00px;font-size:10.3px;color:#5c5c5c;left:396.40px;">Установка цен номенклатуры (по изменившимся ценам поставщика)</div>
<div class="r" style="left:359.2px;top:240px;width:415.7px;height:30.8px;border:4.8px solid #e53b30;border-bottom-width:5.3px;border-radius:7px;background:#fad91d"></div>
<div class="t " style="top:251.00px;font-size:10.3px;color:#4a4a3a;left:396.60px;">Установка цен номенклатуры</div>
<div class="r" style="left:359px;top:74.2px;width:38.8px;height:26.4px;background:#e53b30;border-radius:6.5px"></div>
<div class="r" style="left:364px;top:79px;width:28.5px;height:16px;background:linear-gradient(#f1f1f1,#dcdcdc);border:1px dotted #555;border-left:none"></div>
<svg style="left:365.8px;top:81.8px" width="14" height="12" viewBox="0 0 14 12"><rect x="0.5" y="0.5" width="6" height="7" fill="#e8f0fa" stroke="#7f9fc6" stroke-width="1"/><rect x="7" y="3.5" width="6.2" height="7.6" fill="#e8f0fa" stroke="#7f9fc6" stroke-width="1"/><path d="M2 4.5 H4.2 V7.6 H7.6 V5.8 L10.6 8.6 L7.6 11.4 V9.8 H2 Z" fill="#43b343" stroke="#2f8f2f" stroke-width="0.4"/></svg>
<svg style="left:384.5px;top:87.3px" width="5" height="3" viewBox="0 0 5 3"><path d="M0 0 H5 L2.5 3 Z" fill="#444"/></svg>
</body></html>
